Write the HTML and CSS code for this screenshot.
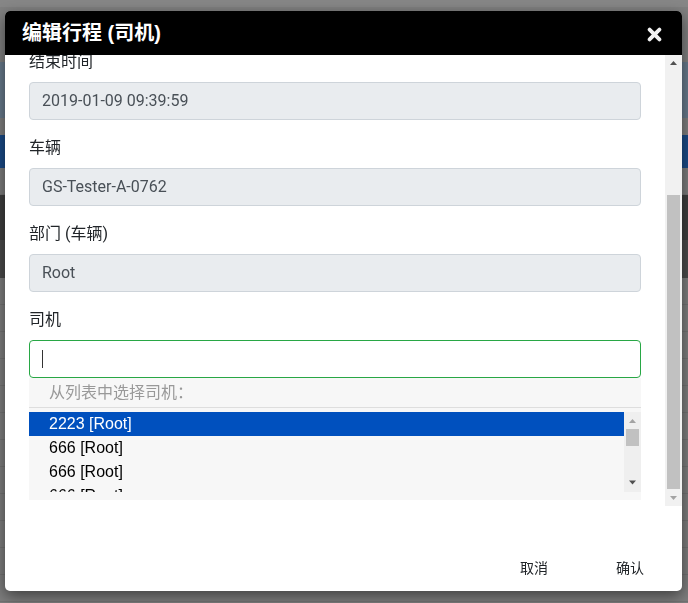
FILE: index.html
```html
<!DOCTYPE html>
<html lang="zh-CN">
<head>
<meta charset="utf-8">
<title>编辑行程 (司机)</title>
<link rel="stylesheet" href="styles.css">
</head>
<body>
<div class="page">
  <div class="band band-top"></div>
  <div class="band band-slate"></div>
  <div class="band band-gap"></div>
  <div class="band band-blue"></div>
  <div class="band band-sub"></div>
  <div class="band band-dark"></div>
  <div class="band band-dark2"></div>
  <div class="rows">
    <div class="row"></div><div class="row"></div><div class="row"></div><div class="row"></div>
    <div class="row"></div><div class="row"></div><div class="row"></div><div class="row"></div>
    <div class="row"></div><div class="row"></div><div class="row"></div><div class="row"></div>
  </div>
</div>

<div class="modal">
  <div class="modal-header">
    <h5 class="modal-title">编辑行程 (司机)</h5>
    <button class="close" type="button" aria-label="关闭">
      <svg width="15" height="15" viewBox="0 0 15 15"><path d="M2.6 2.6 L12.4 12.4 M12.4 2.6 L2.6 12.4" stroke="#f2f2f2" stroke-width="3.8" stroke-linecap="round" fill="none"/></svg>
    </button>
  </div>
  <div class="modal-body">
    <div class="viewport">
      <div class="body-inner">
        <div class="form-group">
          <label class="label">结束时间</label>
          <div class="form-control readonly">2019-01-09 09:39:59</div>
        </div>
        <div class="form-group">
          <label class="label">车辆</label>
          <div class="form-control readonly">GS-Tester-A-0762</div>
        </div>
        <div class="form-group">
          <label class="label">部门 (车辆)</label>
          <div class="form-control readonly">Root</div>
        </div>
        <div class="form-group last">
          <label class="label">司机</label>
          <div class="form-control focused"><span class="caret"></span></div>
          <div class="picker">
            <div class="picker-head">从列表中选择司机：</div>
            <div class="picker-list">
              <div class="opts">
                <div class="opt selected">2223 [Root]</div>
                <div class="opt">666 [Root]</div>
                <div class="opt">666 [Root]</div>
                <div class="opt">666 [Root]</div>
              </div>
              <div class="vscroll inner">
                <div class="sb-btn"><svg width="17" height="17" viewBox="0 0 17 17"><polygon points="5,11 8.5,7 12,11" fill="#a3a3a3"/></svg></div>
                <div class="sb-track top"><div class="sb-thumb small"></div></div>
                <div class="sb-btn"><svg width="17" height="17" viewBox="0 0 17 17"><polygon points="5,5.5 12,5.5 8.5,9.5" fill="#505050"/></svg></div>
              </div>
            </div>
          </div>
        </div>
      </div>
    </div>
    <div class="vscroll main">
      <div class="sb-btn"><svg width="17" height="17" viewBox="0 0 17 17"><polygon points="5,10 8.5,6 12,10" fill="#505050"/></svg></div>
      <div class="sb-track bottom"><div class="sb-thumb big"></div></div>
      <div class="sb-btn"><svg width="17" height="17" viewBox="0 0 17 17"><polygon points="5,7 12,7 8.5,11" fill="#a3a3a3"/></svg></div>
    </div>
  </div>
  <div class="modal-footer">
    <button class="btn" type="button">取消</button>
    <button class="btn" type="button">确认</button>
  </div>
</div>
</body>
</html>
```

FILE: styles.css
```css
* { box-sizing: border-box; }

html, body {
  margin: 0;
  height: 100%;
  overflow: hidden;
}

body {
  background: #7e7e7e;
  font-family: Roboto, "Noto Sans CJK SC", sans-serif;
  font-size: 16px;
  color: #212529;
}

/* darkened page behind the backdrop */
.page {
  display: flex;
  flex-direction: column;
  height: 100%;
}
.band { flex: none; }
.band-top { height: 62px; background: #808080; border-top: 7px solid #878787; }
.band-slate { height: 56px; background: #687a8c; }
.band-gap { height: 17px; background: #7f7f7f; }
.band-blue { height: 33px; background: #1a4a87; }
.band-sub { height: 27px; background: #7d7d7d; border-bottom: 1px solid #747474; }
.band-dark { height: 45px; background: #3e3e3e; }
.band-dark2 { height: 38px; background: #4b4b4b; }
.rows { flex: 1; display: flex; flex-direction: column; }
.row { height: 27px; flex: none; background: #7e7e7e; border-bottom: 1px solid #737373; }

/* modal */
.modal {
  position: fixed;
  left: 5px;
  top: 11px;
  width: 677px;
  height: 580px;
  background: #fff;
  border-radius: 5px;
  overflow: hidden;
  display: flex;
  flex-direction: column;
  box-shadow: 0 5px 15px rgba(0, 0, 0, 0.5);
}

.modal-header {
  flex: none;
  height: 44px;
  background: #000;
  display: flex;
  align-items: center;
  padding: 0 20px 0 17px;
}

.modal-title {
  margin: 0;
  font-family: "Liberation Sans", "Noto Sans CJK SC", sans-serif;
  font-size: 20px;
  font-weight: 700;
  line-height: 30px;
  color: #fff;
}

.close {
  margin-left: auto;
  align-self: flex-start;
  margin-top: 16px;
  width: 15px;
  height: 15px;
  padding: 0;
  border: 0;
  background: none;
  display: block;
}
.close svg { display: block; }

.modal-body {
  flex: 1;
  min-height: 0;
  display: flex;
}

.viewport {
  flex: 1;
  min-width: 0;
  overflow: hidden;
  display: flex;
  flex-direction: column;
  justify-content: flex-end;
}

.body-inner {
  flex: none;
  padding: 16px 24px 6px;
}

.form-group { margin-bottom: 16px; }
.form-group.last { margin-bottom: 0; }

.label {
  display: block;
  height: 24px;
  line-height: 24px;
  margin-bottom: 8px;
  color: #212529;
}

.form-control {
  height: 38px;
  padding: 6px 12px;
  line-height: 24px;
  border: 1px solid #ced4da;
  border-radius: 4px;
  color: #495057;
  background: #fff;
}
.form-control.readonly { background: #e9ecef; }
.form-control.focused {
  border-color: #28a745;
  display: flex;
  align-items: center;
}

.caret {
  display: block;
  width: 1px;
  height: 18px;
  background: #333;
}

.picker {
  background: #f7f7f7;
  padding-bottom: 8px;
}

.picker-head {
  height: 30px;
  line-height: 29px;
  padding-left: 20px;
  border-bottom: 1px solid #dedede;
  color: #999;
  margin-bottom: 4px;
}

.picker-list {
  height: 80px;
  display: flex;
  background: #f7f7f7;
}

.opts {
  flex: 1;
  min-width: 0;
  overflow: hidden;
  font-family: "Liberation Sans", Arial, sans-serif;
}

.opt {
  height: 24px;
  line-height: 24px;
  padding-left: 20px;
  color: #000;
}
.opt.selected {
  background: #0050be;
  color: #fff;
}

/* drawn scrollbars */
.vscroll {
  flex: none;
  width: 17px;
  display: flex;
  flex-direction: column;
  background: #f1f1f1;
}
.vscroll.inner { background: #efefef; }

.sb-btn { flex: none; height: 17px; }
.sb-btn svg { display: block; }

.sb-track {
  flex: 1;
  min-height: 0;
  display: flex;
  flex-direction: column;
  padding: 0 2px;
}
.sb-track.bottom { justify-content: flex-end; }
.sb-track.top { justify-content: flex-start; }

.sb-thumb { flex: none; background: #c1c1c1; }
.sb-thumb.big { height: 294px; }
.sb-thumb.small { height: 17px; }

/* footer */
.modal-footer {
  flex: none;
  height: 85px;
  display: flex;
  justify-content: flex-end;
  align-items: flex-start;
  gap: 8px;
  padding: 43px 8px 6px 0;
}

.btn {
  width: 88px;
  height: 36px;
  padding: 0;
  border: 0;
  background: none;
  font-family: "Noto Sans CJK SC", sans-serif;
  font-size: 14px;
  color: #212529;
}
```
